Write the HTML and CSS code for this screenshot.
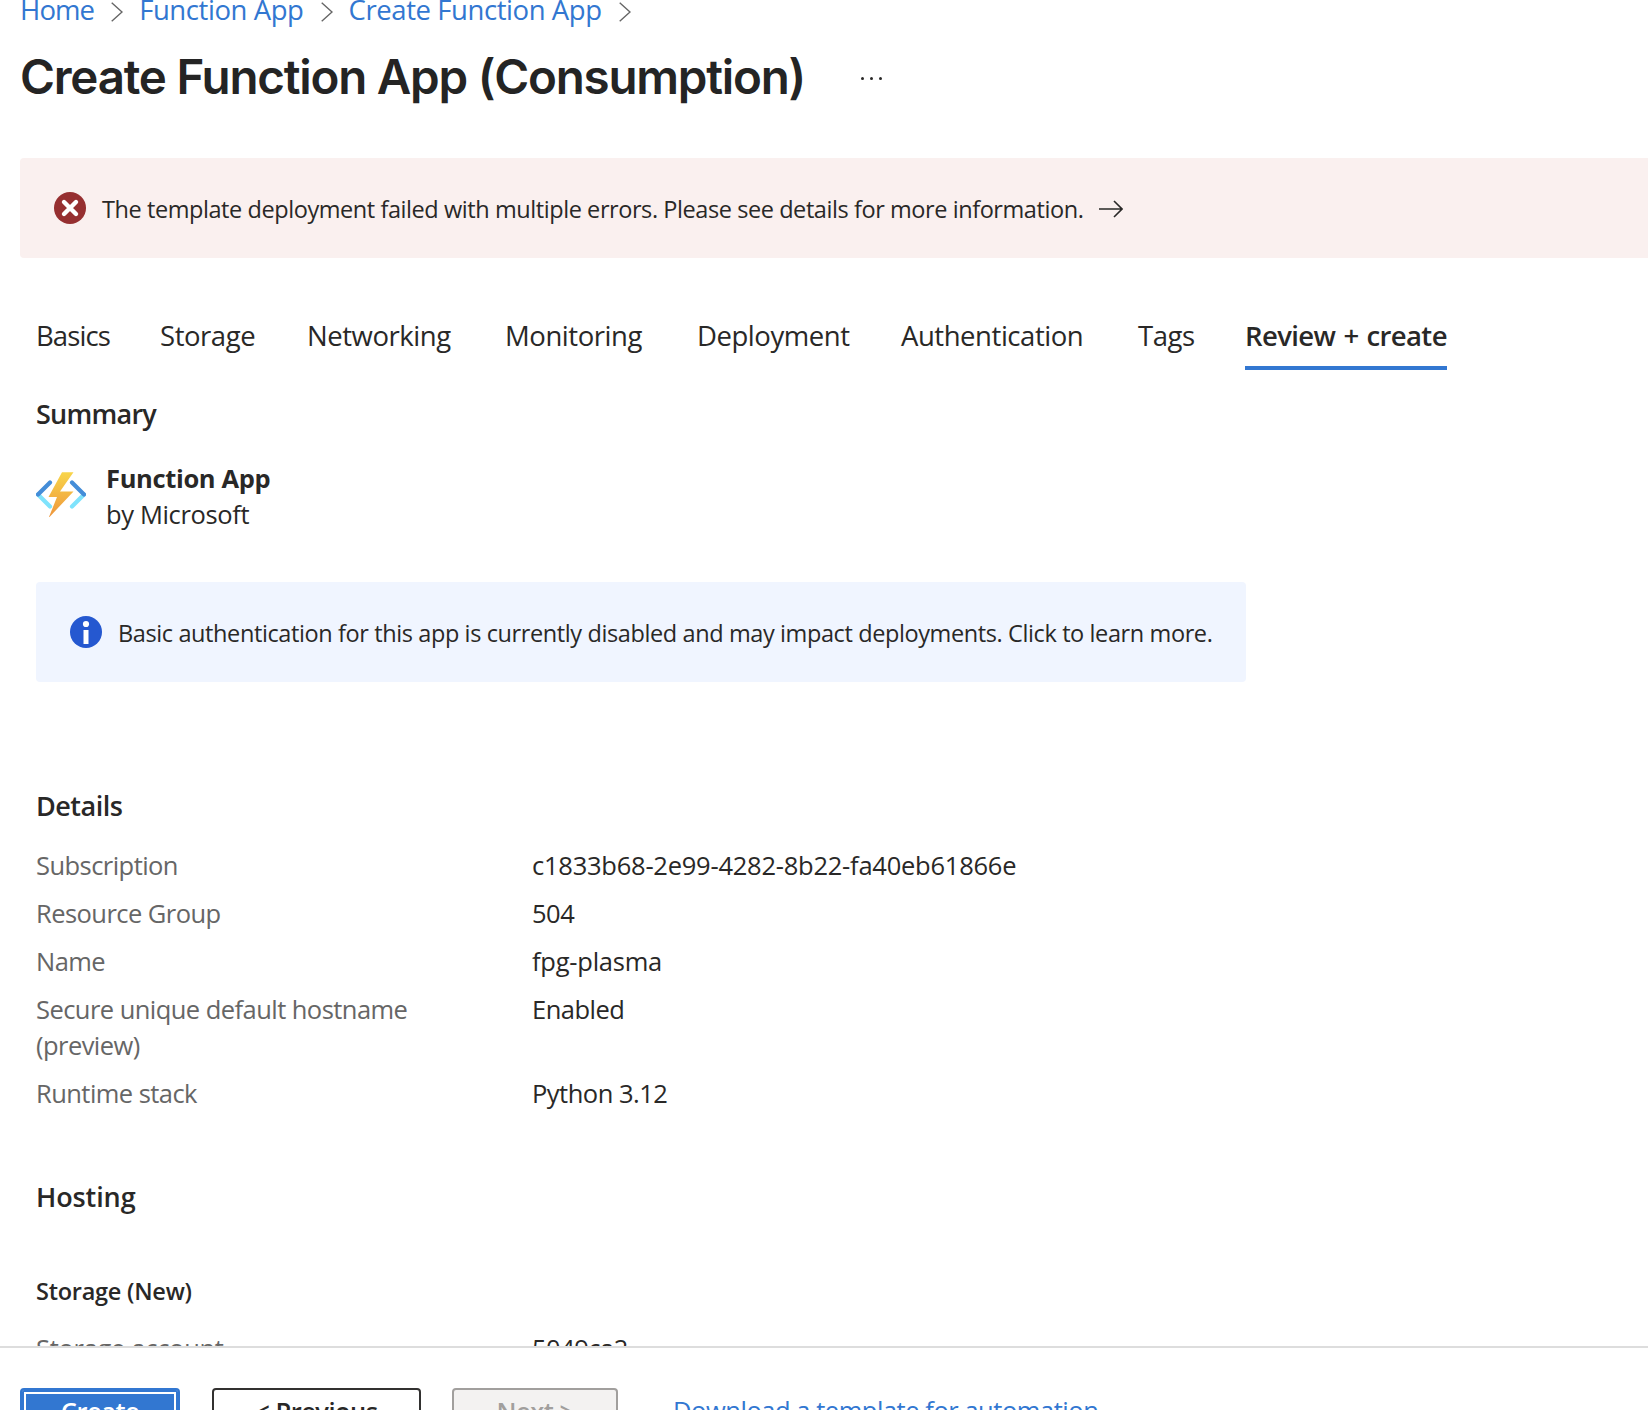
FILE: index.html
```html
<!DOCTYPE html>
<html lang="en">
<head>
<meta charset="utf-8">
<title>Create Function App (Consumption)</title>
<link rel="stylesheet" href="styles.css">
</head>
<body>
<main class="page">
  <nav class="crumbs">
    <a class="tight" href="#">Home</a>
    <svg class="chev" viewBox="0 0 12 20"><path d="M.7.7 11 10 .7 19.3"/></svg>
    <a href="#">Function App</a>
    <svg class="chev" viewBox="0 0 12 20"><path d="M.7.7 11 10 .7 19.3"/></svg>
    <a href="#">Create Function App</a>
    <svg class="chev" viewBox="0 0 12 20"><path d="M.7.7 11 10 .7 19.3"/></svg>
  </nav>
  <header class="heading">
    <h1>Create Function App (Consumption)</h1>
    <span class="more"><i></i><i></i><i></i></span>
  </header>
  <section class="banner banner-error">
    <svg class="status" viewBox="0 0 32 32"><circle cx="16" cy="16" r="16" fill="#962f30"/><path d="M10 10 22 22M22 10 10 22" stroke="#fff" stroke-width="4.400" stroke-linecap="round"/></svg>
    <p>The template deployment failed with multiple errors. Please see details for more information.</p>
    <svg class="arrow" viewBox="0 0 24 18"><path d="M0 9h23M15 1l8 8-8 8"/></svg>
  </section>
  <nav class="tabs">
    <a class="tight">Basics</a>
    <a>Storage</a>
    <a>Networking</a>
    <a>Monitoring</a>
    <a>Deployment</a>
    <a>Authentication</a>
    <a>Tags</a>
    <a class="active">Review + create</a>
  </nav>
  <div class="content">
    <h2 class="summary-title">Summary</h2>
    <div class="product">
      <svg class="fn" viewBox="0 0 50 45">
        <defs><linearGradient id="bolt" x1="0" y1="0" x2="0" y2="1"><stop offset="0" stop-color="#f8d54a"/><stop offset="1" stop-color="#ee963c"/></linearGradient></defs>
        <path d="M2 22.500 14 34.500M48 22.500 36 34.500" stroke="#7fe3fc" stroke-width="4.200" stroke-linecap="round"/>
        <path d="M14 10.500 2 22.500M36 10.500 48 22.500" stroke="#448dd8" stroke-width="4.200" stroke-linecap="round"/>
        <path d="M26 .3H37.500L24 19.500H37.500L13.500 45H13L21 25H12.500Z" fill="url(#bolt)"/>
      </svg>
      <div><strong>Function App</strong><br>by Microsoft</div>
    </div>
    <section class="banner banner-info">
      <svg class="status" viewBox="0 0 32 32"><circle cx="16" cy="16" r="16" fill="#2558d0"/><circle cx="16" cy="8" r="3.100" fill="#fff"/><path d="M16 14v14" stroke="#fff" stroke-width="5"/></svg>
      <p>Basic authentication for this app is currently disabled and may impact deployments. Click to learn more.</p>
    </section>
    <h2 class="details-title">Details</h2>
    <dl>
      <dt>Subscription</dt><dd class="id">c1833b68-2e99-4282-8b22-fa40eb61866e</dd>
      <dt>Resource Group</dt><dd>504</dd>
      <dt>Name</dt><dd class="id">fpg-plasma</dd>
      <dt>Secure unique default hostname (preview)</dt><dd>Enabled</dd>
      <dt>Runtime stack</dt><dd>Python 3.12</dd>
    </dl>
    <h2 class="hosting-title">Hosting</h2>
    <h3>Storage (New)</h3>
    <dl class="storage"><dt>Storage account</dt><dd>5049ca2</dd></dl>
  </div>
</main>
<footer class="actions">
  <button class="primary">Create</button>
  <button class="previous">&lt; Previous</button>
  <button class="next" disabled>Next &gt;</button>
  <a href="#">Download a template for automation</a>
</footer>
</body>
</html>
```
FILE: styles.css
```css
* { box-sizing: border-box; }
body { margin: 0; width: 1648px; height: 1410px; overflow: hidden; display: flex; flex-direction: column; background: #fff; color: #292827; font: 25.5px/36px "Open Sans", "Noto Sans", sans-serif; letter-spacing: -.35px; }
h1, h2, h3, p, dl, dd { margin: 0; }
a { color: #3277d1; text-decoration: none; }
svg { flex: none; fill: none; }
.page { flex: none; height: 1346px; overflow: hidden; }
.crumbs { display: flex; align-items: center; height: 40px; margin-top: -10px; padding-left: 20px; font-size: 27.5px; line-height: 40px; letter-spacing: -.42px; }
.crumbs .tight { letter-spacing: -.9px; }
.chev { width: 12px; height: 20px; margin: 3px 16px 0 17px; stroke: #666; stroke-width: 1.4; }
.heading { display: flex; align-items: center; height: 60px; margin: 17px 0 51px 20px; }
h1 { font: 600 47.5px/60px Inter, sans-serif; letter-spacing: -1.22px; color: #242424; }
.more { display: flex; gap: 6px; margin: 2px 0 0 56px; }
.more i { width: 3px; height: 3px; border-radius: 50%; background: #292827; }
.banner { display: flex; height: 100px; padding: 34px 34px 0; font-size: 23.5px; line-height: 32px; letter-spacing: -.39px; white-space: nowrap; }
.banner p { margin: 1px 0 0 16px; }
.banner-error { margin-left: 20px; border-radius: 4px 0 0 4px; background: #faf0ef; letter-spacing: -.425px; }
.banner-info { width: 1210px; margin-top: 50px; border-radius: 4px; background: #f0f5ff; }
.status { width: 32px; height: 32px; }
.arrow { width: 24px; height: 18px; margin: 8px 0 0 16px; stroke: #292827; stroke-width: 1.6; }
.tabs { display: grid; grid-template-columns: 124px 147px 198px 192px 204px 237px 107px 202px; height: 55px; margin: 57px 0 0 36px; padding-top: 1px; font-size: 27.5px; line-height: 40px; letter-spacing: -.45px; white-space: nowrap; }
.tabs a { color: inherit; }
.tabs .tight { letter-spacing: -.9px; }
.tabs .active { font-weight: 600; letter-spacing: -.6px; word-spacing: 1.4px; border-bottom: 4px solid #3277d1; }
.content { padding-left: 36px; }
h2 { font-size: 27px; line-height: 40px; font-weight: 600; letter-spacing: -.5px; }
.summary-title { margin-top: 24px; letter-spacing: -.75px; }
.product { display: flex; gap: 20px; margin-top: 26px; }
.fn { width: 50px; height: 45px; margin-top: 12px; }
.details-title { margin-top: 104px; }
dl { display: grid; grid-template-columns: 420px 1fr; column-gap: 76px; row-gap: 12px; margin-top: 21px; }
dt { color: #666; letter-spacing: -.55px; }
dd { margin: 0; letter-spacing: -.5px; }
.id { letter-spacing: -.24px; }
.hosting-title { margin-top: 66px; letter-spacing: -.1px; }
h3 { margin-top: 58px; font-size: 23.5px; line-height: 32px; font-weight: 600; letter-spacing: -.25px; }
.storage { margin-top: 23px; }
.storage dt { letter-spacing: -.3px; }
.actions { display: flex; flex: none; border-top: 2px solid #ddd; padding: 40px 0 0 20px; }
button { height: 48px; padding: 0 0 3px; border: 2px solid #323130; border-radius: 4px; background: #fff; color: inherit; font: 600 25.5px/36px "Open Sans", sans-serif; letter-spacing: -.5px; }
.primary { width: 160px; border-color: #3277d1; background: #3277d1; color: #fff; box-shadow: inset 0 0 0 2px #3277d1, inset 0 0 0 4px #fff; }
.previous { width: 209px; margin-left: 32px; }
.next { width: 166px; margin: 0 55px 0 31px; border-color: #a19f9d; background: #f3f2f1; color: #a19f9d; }
.actions a { line-height: 45px; letter-spacing: -.46px; }
```
